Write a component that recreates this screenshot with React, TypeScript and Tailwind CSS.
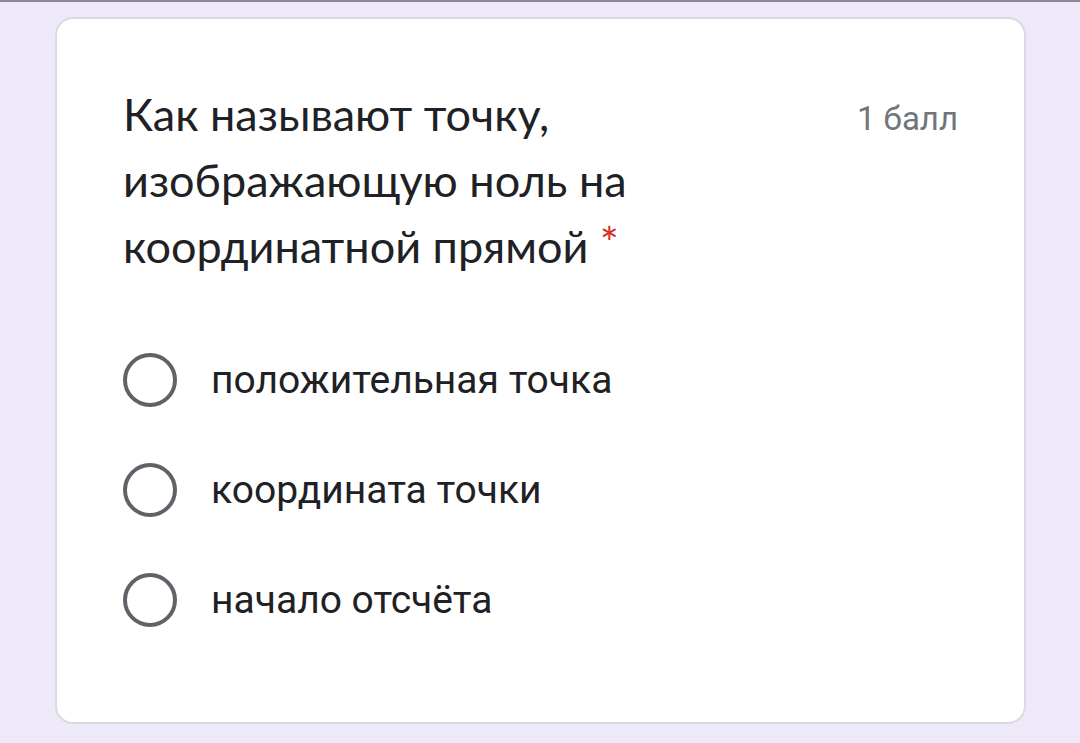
import React from 'react';

const options = ['положительная точка', 'координата точки', 'начало отсчёта'];

const Radio: React.FC = () => (
  <div className="w-[54px] h-[54px] rounded-full border-[4px] border-[#5f6368] flex-shrink-0" />
);

export default function App() {
  return (
    <div className="w-[1080px] h-[743px] bg-[#ede9f8] border-t-2 border-[#8d8a96] overflow-hidden">
      <div className="ml-[55px] mt-[15px] w-[971px] h-[707px] bg-white rounded-[18px] border-2 border-[#dcd9e2] pl-[66px] pr-[66px] pt-[62px]">
        <div className="flex items-start justify-between">
          <h1
            className="text-[45px] leading-[66px] text-[#202124] w-[600px]"
            style={{ fontFamily: 'Lato, "Open Sans", sans-serif' }}
          >
            Как называют точку, изображающую ноль на координатной прямой{' '}
            <span className="text-[#d93025] relative -top-[4px]">*</span>
          </h1>
          <span
            className="text-[33px] leading-[44px] text-[#70757a] mt-[16px]"
            style={{ fontFamily: 'Roboto, sans-serif' }}
          >
            1 балл
          </span>
        </div>
        <div className="mt-[74px] flex flex-col gap-[56px]">
          {options.map((o) => (
            <div key={o} className="flex items-center gap-[34px]">
              <Radio />
              <span className="text-[39px] leading-[54px] text-[#202124]" style={{ fontFamily: 'Roboto, sans-serif' }}>
                {o}
              </span>
            </div>
          ))}
        </div>
      </div>
    </div>
  );
}
